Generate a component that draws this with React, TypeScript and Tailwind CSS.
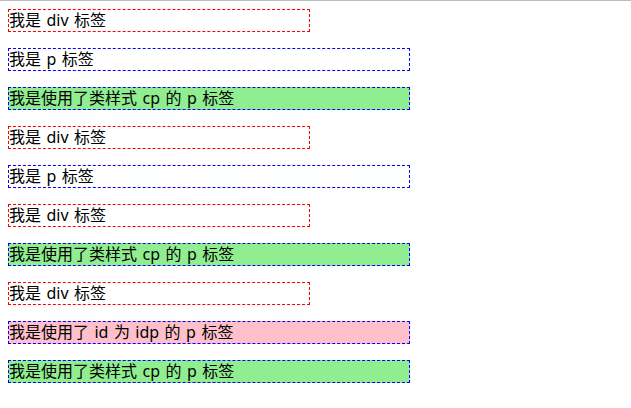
import React from "react";

type Item = { text: string; w: string; border: string; bg: string };

const items: Item[] = [
  { text: "我是 div 标签", w: "w-[302px]", border: "border-[#ff0000]", bg: "bg-white" },
  { text: "我是 p 标签", w: "w-[402px]", border: "border-[#0000ff]", bg: "bg-white" },
  { text: "我是使用了类样式 cp 的 p 标签", w: "w-[402px]", border: "border-[#0000ff]", bg: "bg-[#90ee90]" },
  { text: "我是 div 标签", w: "w-[302px]", border: "border-[#ff0000]", bg: "bg-white" },
  { text: "我是 p 标签", w: "w-[402px]", border: "border-[#0000ff]", bg: "bg-white" },
  { text: "我是 div 标签", w: "w-[302px]", border: "border-[#ff0000]", bg: "bg-white" },
  { text: "我是使用了类样式 cp 的 p 标签", w: "w-[402px]", border: "border-[#0000ff]", bg: "bg-[#90ee90]" },
  { text: "我是 div 标签", w: "w-[302px]", border: "border-[#ff0000]", bg: "bg-white" },
  { text: "我是使用了 id 为 idp 的 p 标签", w: "w-[402px]", border: "border-[#0000ff]", bg: "bg-[#ffc0cb]" },
  { text: "我是使用了类样式 cp 的 p 标签", w: "w-[402px]", border: "border-[#0000ff]", bg: "bg-[#90ee90]" },
];

export default function App() {
  return (
    <div className="w-[631px] h-[408px] bg-white border-t border-[#bdbdbd] overflow-hidden">
      <div
        className="flex flex-col gap-4 px-2 pt-2 text-[16px] leading-[21px] text-black [word-spacing:1.3px]"
        style={{ fontFamily: '"Noto Sans", "Noto Sans CJK SC", sans-serif' }}
      >
        {items.map((it, i) => (
          <div key={i} className={`${it.w} h-[23px] border border-dashed ${it.border} ${it.bg} whitespace-nowrap`}>
            {it.text}
          </div>
        ))}
      </div>
    </div>
  );
}
